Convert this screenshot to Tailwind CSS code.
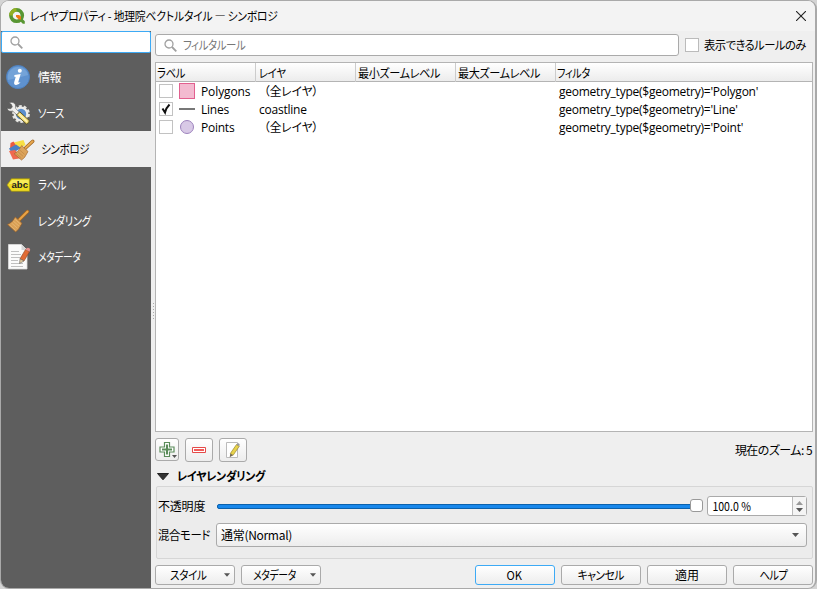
<!DOCTYPE html>
<html lang="ja">

<head>
    <meta charset="UTF-8">
    <meta name="viewport" content="width=device-width, initial-scale=1.0">
    <title>レイヤプロパティ - シンボロジ</title>
    <script src="https://cdn.jsdelivr.net/npm/@tailwindcss/browser@4"></script>
    <style>
        body {
            font-family: 'Open Sans', 'Noto Sans CJK JP', sans-serif;
            font-feature-settings: 'palt';
        }
        .ui {
            font-family: 'Noto Sans CJK JP', sans-serif;
        }
    </style>
</head>

<body class="w-[817px] h-[589px] overflow-hidden bg-[#d4d4d4] text-xs text-black whitespace-nowrap">

    <div class="w-[817px] h-[589px] flex flex-col overflow-hidden rounded-[9px] border border-r-2 border-[#a9a9a9] bg-[#efefef]">

        <!-- Barra de título -->
        <header class="h-[30px] shrink-0 flex items-center bg-[#f3f3f3] pl-2 pr-[9px]">
            <svg class="size-4 mr-[5px]" viewBox="0 0 16 16">
                <circle cx="7.6" cy="7.6" r="5.7" fill="none" stroke="#589632" stroke-width="3.6" />
                <path d="M2 7.5a5.7 5.7 0 0 1 5.5-5.6" fill="none" stroke="#93b023" stroke-width="3.6" />
                <path d="M7 7h3.2l1.8 1.8v2.6H9.8L7 8.8z" fill="#ee7913" />
                <path d="M10.4 12.2h2.2v-2.1l3.2 3.2v2.5h-2z" fill="#589632" />
            </svg>
            <h1 class="ui text-xs tracking-[-0.2px] origin-left scale-x-[.9]">レイヤプロパティ - 地理院ベクトルタイル — シンボロジ</h1>
            <svg class="size-[10px] ml-auto" viewBox="0 0 10 10" fill="none" stroke="#222" stroke-width="1.1">
                <path d="M0 0l10 10M10 0L0 10" />
            </svg>
        </header>

        <div class="flex flex-1 min-h-0">

            <!-- Menú lateral -->
            <aside class="w-[150px] shrink-0 flex flex-col bg-[#5e5e5e] text-white ui">
                <div class="h-[22px] shrink-0 flex items-center border border-[#3daaf5] rounded-[2px] bg-white pl-2 mb-[6px]">
                    <svg class="size-[13px]" viewBox="0 0 13 13" fill="none" stroke="#a0a0a0" stroke-width="1.3">
                        <circle cx="5" cy="5" r="4" />
                        <path d="M8 8l4.3 4.3" stroke-width="1.8" />
                    </svg>
                </div>
                <div class="h-9 flex items-center pl-[5px] gap-2">
                    <svg class="size-6" viewBox="0 0 24 24">
                        <circle cx="12" cy="12" r="11.5" fill="#5f92cf" stroke="#4f82c0" />
                        <path d="M1.800 10a10.500 10.500 0 0 1 20.400 0Q12 13 1.800 15z" fill="#74a3d8" />
                        <circle cx="13.800" cy="5.700" r="2" fill="#fff" />
                        <path d="M8.500 10l6.200-.9-2.400 7.800q-.2 1.300 2.300.2-1.500 2.900-4.600 2.800-2.600-.2-1.700-3.200l1.400-4.700-1.600-.4z" fill="#fff" />
                    </svg>
                    <span class="tracking-[-0.4px]">情報</span>
                </div>
                <div class="h-9 flex items-center pl-[5px] gap-2">
                    <svg class="size-6" viewBox="0 0 24 24">
                        <circle cx="15" cy="13" r="7.800" fill="none" stroke="#e4e4e0" stroke-width="2.200" stroke-dasharray="3 1.900" />
                        <circle cx="15" cy="13" r="6.300" fill="#5b8fce" stroke="#ececea" stroke-width="2.200" />
                        <path d="M3 1.800Q7.500.3 9.300 3.600 10 5.500 9.300 7.200l5 4.800-2.600 2.600-5-4.600Q2.500 11 .8 7.500l4 .3 1.600-2L5.300 3.300z" fill="#f0f0ee" stroke="#555" stroke-width=".5" />
                        <path d="M10.500 14l3.200-3.200 9.500 8.700q.5 2.500-2.800 3.500z" fill="#f2dc77" stroke="#51491f" stroke-width=".9" />
                        <path d="M13 13l8 7.700" stroke="#fff5b8" stroke-width="1.400" />
                    </svg>
                    <span class="tracking-[-0.7px] origin-left scale-x-[.86]">ソース</span>
                </div>
                <div class="h-9 flex items-center pl-[7px] gap-[6px] bg-[#efefef] text-black">
                    <svg class="w-[27px] h-6" viewBox="0 0 27 24">
                        <path d="M4 6l11.500-3 2 5-9 5z" fill="#f8df45" />
                        <path d="M2.500 6l3-1.500L9 10l-7 2z" fill="#ea5a40" />
                        <path d="M1 11.500l7-4 5 3.500-9 5.500z" fill="#4a80c4" />
                        <path d="M1 14l6-1 7 8-9 1.500z" fill="#f0694f" />
                        <path d="M24.800 4.300L17.500 11" stroke="#9b6120" stroke-width="3.300" stroke-linecap="round" />
                        <path d="M24.700 4.200L17.500 11" stroke="#e7a84f" stroke-width="2" stroke-linecap="round" />
                        <path d="M13.700 8.500l6.300 6-3.500 6-3 2.500-7.300-6.200q4.500-1.500 7.500-8.300z" fill="#dca35a" stroke="#a4692f" stroke-width=".7" />
                        <path d="M8 16.500l5.500 4.500M10 14.800l5 4.500M11.500 12.800l5 4.500" stroke="#b9803f" stroke-width=".6" />
                    </svg>
                    <span class="tracking-[-0.4px] origin-left scale-x-[.88]">シンボロジ</span>
                </div>
                <div class="h-9 flex items-center pl-[5px] gap-2">
                    <svg class="size-6" viewBox="0 0 24 24">
                        <path d="M1 12l4.500-6.300h18V18.300h-18z" fill="#f0dc22" stroke="#9f900f" stroke-width=".7" />
                        <path d="M3 11l3-4h16.500v4z" fill="#f8ec58" />
                        <text x="5.500" y="15" font-family="Liberation Sans" font-weight="bold" font-size="9.500" textLength="16.500" lengthAdjust="spacingAndGlyphs" fill="#222">abc</text>
                    </svg>
                    <span class="tracking-[-0.4px] origin-left scale-x-[.86]">ラベル</span>
                </div>
                <div class="h-9 flex items-center pl-[5px] gap-2">
                    <svg class="size-6" viewBox="0 0 24 24">
                        <path d="M21.500 2.500L13 11" stroke="#a4651f" stroke-width="3.300" stroke-linecap="round" />
                        <path d="M21.500 2.500L13 11" stroke="#e9a448" stroke-width="2" stroke-linecap="round" />
                        <path d="M9.300 8l6.700 6.300-3.300 5.700-3 3-8.200-7.500q4.800-1.500 7.800-7.500z" fill="#daa055" stroke="#9b622a" stroke-width=".7" />
                        <path d="M3.500 15.800l6 5.500M5.500 14l6 5.300M7.200 12l6 5.300M8.700 10l6 5.300" stroke="#edc283" stroke-width=".6" />
                    </svg>
                    <span class="tracking-[-0.4px] origin-left scale-x-[.86]">レンダリング</span>
                </div>
                <div class="h-9 flex items-center pl-[7px] gap-[5px]">
                    <svg class="w-[25px] h-[26px]" viewBox="0 0 25 26">
                        <path d="M.5.500h13l5.500 5.500v19H.5z" fill="#fbfbfb" stroke="#ddd" stroke-width=".8" />
                        <path d="M13.500.500v5.500H19" fill="#d5d5d5" />
                        <path d="M3 7.500h8M3 10.500h10M3 13.500h9M3 16.500h7M3 19.500h12M3 22.500h12" stroke="#c0c0c0" stroke-width="1.200" />
                        <path d="M17.500 5.500l4 2.200-5.500 9.300-4-2.200z" fill="#e16b35" stroke="#8f431f" stroke-width=".6" />
                        <path d="M17.500 5.500q1.500-2.500 4-1.200 1.500 1.200 0 3.400z" fill="#e58e8c" />
                        <path d="M12 14.800l4 2.200-4.500 2.500z" fill="#e5cb9c" stroke="#555" stroke-width=".5" />
                    </svg>
                    <span class="tracking-[-0.4px] origin-left scale-x-[.81]">メタデータ</span>
                </div>
            </aside>

            <!-- Separador -->
            <div class="w-1 shrink-0 flex flex-col items-center gap-[2px] pt-[272px]">
                <i class="size-px bg-[#aaa]"></i><i class="size-px bg-[#aaa]"></i><i class="size-px bg-[#aaa]"></i><i class="size-px bg-[#aaa]"></i><i class="size-px bg-[#aaa]"></i><i class="size-px bg-[#aaa]"></i>
            </div>

            <main class="flex-1 min-w-0 flex flex-col pt-[3px] pr-[2px]">

                <!-- Filtro -->
                <div class="flex items-center h-[22px] ui">
                    <div class="w-[524px] h-[22px] shrink-0 flex items-center gap-[6px] pl-2 border border-[#aaa] rounded-[3px] bg-white text-[#777]">
                        <svg class="size-[13px]" viewBox="0 0 13 13" fill="none" stroke="#a0a0a0" stroke-width="1.3">
                            <circle cx="5" cy="5" r="4" />
                            <path d="M8 8l4.300 4.300" stroke-width="1.8" />
                        </svg>
                        <span class="tracking-[-0.5px] origin-left scale-x-[.87]">フィルタルール</span>
                    </div>
                    <span class="size-[14px] shrink-0 ml-[6px] mr-[5px] border border-[#bbb] bg-white"></span>
                    <span class="tracking-[-0.6px] origin-left scale-x-[.945]">表示できるルールのみ</span>
                </div>

                <!-- Tabla de reglas -->
                <div class="mt-[6px] h-[370px] w-[658px] border border-[#b4b4b4] bg-white">
                    <div class="h-[19px] grid grid-cols-[100px_100px_100px_100px_1fr] border-b border-[#b4b4b4] bg-linear-to-b from-white to-[#ececec] leading-[19px] ui">
                        <span class="pl-px border-r border-[#ccc] tracking-[-0.4px]"><b class="inline-block font-normal origin-left scale-x-[.86]">ラベル</b></span>
                        <span class="pl-[3px] border-r border-[#ccc] tracking-[-0.4px]"><b class="inline-block font-normal origin-left scale-x-[.86]">レイヤ</b></span>
                        <span class="pl-[2px] border-r border-[#ccc] tracking-[-0.4px]"><b class="inline-block font-normal origin-left scale-x-[.925]">最小ズームレベル</b></span>
                        <span class="pl-[2px] border-r border-[#ccc] tracking-[-0.4px]"><b class="inline-block font-normal origin-left scale-x-[.925]">最大ズームレベル</b></span>
                        <span class="pl-px tracking-[-0.4px]"><b class="inline-block font-normal origin-left scale-x-[.84]">フィルタ</b></span>
                    </div>
                    <div class="h-[18px] grid grid-cols-[103px_300px_1fr] items-center">
                        <span class="flex items-center pl-[3px]">
                            <i class="size-[14px] border border-[#c2c2c2] mr-[6px]"></i>
                            <i class="size-4 border border-[#e2608f] bg-[#f3bad0] mr-[6px]"></i>
                            <span class="pt-[2px] tracking-[-0.1px]">Polygons</span>
                        </span>
                        <span class="pl-[5px] pt-[2px] origin-left scale-x-[.97]">（全レイヤ）</span>
                        <span class="pt-[2px] tracking-[-0.24px]">geometry_type($geometry)='Polygon'</span>
                    </div>
                    <div class="h-[18px] grid grid-cols-[103px_300px_1fr] items-center">
                        <span class="flex items-center pl-[3px]">
                            <i class="size-[14px] border border-[#c2c2c2] mr-[6px]">
                                <svg class="size-3" viewBox="0 0 12 12" fill="none" stroke="#111" stroke-width="2">
                                    <path d="M2.500 5.500l2.500 4q1-4.500 4.500-8" />
                                </svg>
                            </i>
                            <i class="w-4 h-[2px] bg-[#777] mr-[6px]"></i>
                            <span class="pt-[2px] tracking-[-0.24px]">Lines</span>
                        </span>
                        <span class="pt-[2px] tracking-[-0.24px]">coastline</span>
                        <span class="pt-[2px] tracking-[-0.24px]">geometry_type($geometry)='Line'</span>
                    </div>
                    <div class="h-[18px] grid grid-cols-[103px_300px_1fr] items-center">
                        <span class="flex items-center pl-[3px]">
                            <i class="size-[14px] border border-[#c2c2c2] mr-[7px]"></i>
                            <i class="size-[14px] rounded-full border border-[#9d83bd] bg-[#d8c9e6] mr-[7px]"></i>
                            <span class="pt-[2px] tracking-[-0.24px]">Points</span>
                        </span>
                        <span class="pl-[5px] pt-[2px] origin-left scale-x-[.97]">（全レイヤ）</span>
                        <span class="pt-[2px] tracking-[-0.24px]">geometry_type($geometry)='Point'</span>
                    </div>
                </div>

                <!-- Botones de edición -->
                <div class="mt-[6px] flex h-6 ui">
                    <button class="w-6 h-[23px] flex items-center justify-center border border-[#aaa] rounded-[3px] bg-linear-to-b from-white to-[#ededed]">
                        <svg class="w-[22px] h-[21px] shrink-0" viewBox="0 0 22 21">
                            <path d="M8.500 3.500h5v4.500h4.500v5h-4.500v4.500h-5v-4.500H4v-5h4.500z" fill="#fff" stroke="#5b8c5a" stroke-width="1.200" />
                            <path d="M11 5.500v10M6 10.500h10" stroke="#5b8c5a" stroke-width="2" />
                            <path d="M16 16h5l-2.500 3z" fill="#555" />
                        </svg>
                    </button>
                    <button class="w-7 h-6 ml-[6px] flex items-center justify-center border border-[#aaa] rounded-[3px] bg-linear-to-b from-white to-[#ededed]">
                        <svg class="w-[14px] h-[6px]" viewBox="0 0 14 6">
                            <path d="M.5.5h13v5H.5z" fill="#fff" stroke="#e54a49" />
                            <path d="M2 3h10" stroke="#f25b59" stroke-width="2" />
                        </svg>
                    </button>
                    <button class="w-7 h-6 ml-[6px] flex items-center justify-center border border-[#aaa] rounded-[3px] bg-linear-to-b from-white to-[#ededed]">
                        <svg class="size-4" viewBox="0 0 16 16">
                            <path d="M1.500.5h11v15h-11z" fill="#fff" stroke="#bbb" />
                            <path d="M11.500 2.500l2.800 1.800-6.200 9-2.800-1.800z" fill="#e8d34c" stroke="#8a7720" stroke-width=".6" />
                            <path d="M11.500 2.500q1.300-1.700 2.500-1t.3 2.800z" fill="#999" />
                            <path d="M5.300 11.500l2.800 1.800-3.400 2z" fill="#766a53" />
                        </svg>
                    </button>
                    <span class="ml-auto self-center pr-px tracking-[-0.55px]">現在のズーム: 5</span>
                </div>

                <!-- Renderizado de capa -->
                <div class="mt-[4px] h-5 flex items-center gap-2 pl-[2px] ui font-bold">
                    <svg class="w-3 h-[7px]" viewBox="0 0 12 7"><path d="M.5.5h11L6 6.800z" fill="#333" stroke="#222" /></svg>
                    <span class="tracking-[-0.4px] origin-left scale-x-[.92]">レイヤレンダリング</span>
                </div>
                <section class="h-[73px] w-[657px] ml-px border border-[#d6d6d6] rounded-[2px] bg-[#ececec] pt-[9px] pl-px ui">
                    <div class="flex items-center h-5">
                        <span class="w-[59px] tracking-[-0.2px]">不透明度</span>
                        <div class="relative w-[486px] h-[14px] flex items-center">
                            <div class="w-full h-[5px] rounded-[2px] border border-[#0b61ac] bg-[#1787eb]"></div>
                            <div class="absolute right-0 top-0 w-[13px] h-[13px] border border-[#999] rounded-[3px] bg-white"></div>
                        </div>
                        <div class="ml-1 w-[100px] h-5 flex border border-[#aaa] rounded-[3px] bg-white leading-[18px]">
                            <span class="flex-1 pl-[5px] origin-left scale-x-[.88]">100.0 %</span>
                            <span class="w-[14px] flex flex-col items-center justify-center gap-[3px] border-l border-[#bbb] bg-[#f4f4f4]">
                                <svg class="w-[7px] h-1" viewBox="0 0 7 4"><path d="M0 4h7L3.500 0z" fill="#999" /></svg>
                                <svg class="w-[7px] h-1" viewBox="0 0 7 4"><path d="M0 0h7L3.500 4z" fill="#555" /></svg>
                            </span>
                        </div>
                    </div>
                    <div class="flex items-center mt-[7px] h-6">
                        <div class="w-[58px]"><span class="inline-block tracking-[-0.4px] origin-left scale-x-[.95]">混合モード</span></div>
                        <div class="w-[591px] h-6 flex items-center justify-between pl-1 pr-[7px] border border-[#aaa] rounded-[3px] bg-linear-to-b from-white to-[#ededed]">
                            <span class="tracking-[-0.3px]">通常(Normal)</span>
                            <svg class="w-[7px] h-1" viewBox="0 0 7 4"><path d="M0 0h7L3.500 4z" fill="#555" /></svg>
                        </div>
                    </div>
                </section>

                <!-- Botones inferiores -->
                <footer class="mt-[6px] flex gap-[6px] h-5 ui">
                    <button class="w-20 h-5 flex items-center justify-between pl-[14px] pr-1 border border-[#aaa] rounded-[3px] bg-linear-to-b from-white to-[#ededed]">
                        <span class="tracking-[-0.4px] origin-left scale-x-[.88]">スタイル</span>
                        <svg class="w-[6px] h-1" viewBox="0 0 7 4"><path d="M0 0h7L3.500 4z" fill="#555" /></svg>
                    </button>
                    <button class="w-20 h-5 flex items-center justify-between pl-[11px] pr-1 border border-[#aaa] rounded-[3px] bg-linear-to-b from-white to-[#ededed]">
                        <span class="tracking-[-0.4px] origin-left scale-x-[.82]">メタデータ</span>
                        <svg class="w-[6px] h-1" viewBox="0 0 7 4"><path d="M0 0h7L3.500 4z" fill="#555" /></svg>
                    </button>
                    <button class="w-20 h-5 flex items-center justify-center ml-auto pr-[2px] border border-[#3daaf5] rounded-[3px] bg-linear-to-b from-white to-[#ededed]"><span class="scale-x-[.93]">OK</span></button>
                    <button class="w-20 h-5 flex items-center justify-center border border-[#aaa] rounded-[3px] bg-linear-to-b from-white to-[#ededed] tracking-[-0.6px]"><span class="scale-x-[.9]">キャンセル</span></button>
                    <button class="w-20 h-5 flex items-center justify-center border border-[#aaa] rounded-[3px] bg-linear-to-b from-white to-[#ededed]">適用</button>
                    <button class="w-20 h-5 flex items-center justify-center border border-[#aaa] rounded-[3px] bg-linear-to-b from-white to-[#ededed] tracking-[-0.6px]"><span class="scale-x-[.86]">ヘルプ</span></button>
                </footer>
            </main>
        </div>
    </div>

</body>

</html>
